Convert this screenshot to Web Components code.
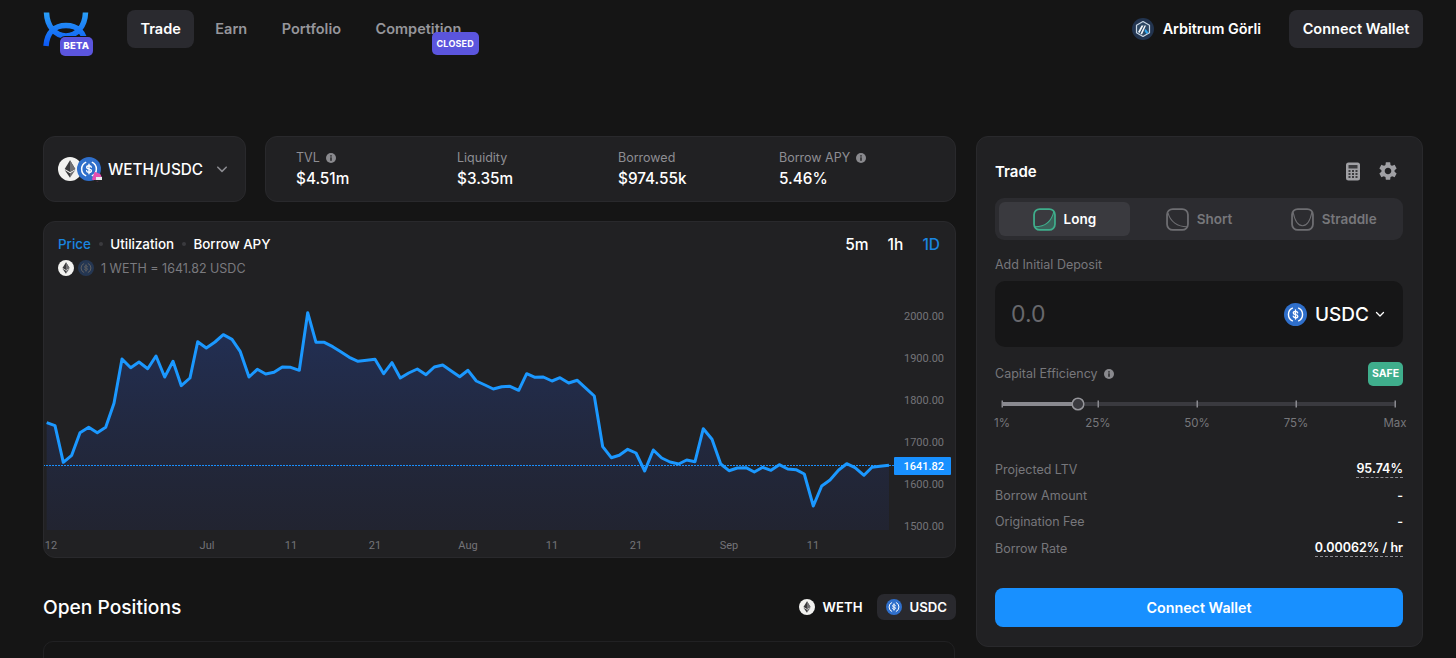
<!DOCTYPE html>
<html>
<head>
<meta charset="utf-8">
<title>Trade</title>
<style>
html,body{margin:0;height:658px;overflow:hidden;background:#151515;color:#fff;font-family:Inter,"Liberation Sans",sans-serif}
</style>
</head>
<body>
<app-shell></app-shell>
<script>
const define = (name, html) => {
  customElements.define(name, class extends HTMLElement {
    constructor() {
      super();
      this.attachShadow({ mode: "open" });
    }
    connectedCallback() {
      this.shadowRoot.innerHTML = typeof html === "function" ? html(this) : html;
    }
  });
};
const chevron = (w, c) => `<svg width="${w}" height="${w}" viewBox="0 0 10 10" fill="none" stroke="${c}" stroke-width="1.3" stroke-linecap="round" stroke-linejoin="round"><path d="M1.5 3.5 5 7l3.5-3.5"/></svg>`;

define("token-icon", el => {
  const s = el.getAttribute("size") || 20;
  const op = el.hasAttribute("dim") ? "opacity:.28" : "";
  const eth = `<circle cx="12" cy="12" r="12" fill="#f2f2f0"/><path fill="#3a3a3c" d="M12 3.2 6.7 12l5.3 3.1 5.3-3.1z"/><path fill="#6f6f72" d="M12 3.2V15.1l5.3-3.1z"/><path fill="#3a3a3c" d="m6.7 13.1 5.3 7.6v-4.5z"/><path fill="#6f6f72" d="m17.3 13.1-5.3 7.6v-4.5z"/>`;
  const usdc = `<circle cx="12" cy="12" r="12" fill="#2f6fcb"/><path fill="none" stroke="#fff" stroke-width="1.5" d="M9.2 5.1a7.5 7.5 0 0 0 0 13.8M14.8 5.1a7.5 7.5 0 0 1 0 13.8"/><path fill="none" stroke="#fff" stroke-width="1.4" stroke-linecap="round" d="M14.3 10.200c-.2-1-1.100-1.500-2.300-1.500-1.300 0-2.300.6-2.300 1.700 0 2.500 4.700 1 4.700 3.300 0 1.100-1.100 1.700-2.400 1.700s-2.200-.6-2.400-1.600M12 7.200v9.600"/>`;
  return `<style>:host{display:inline-flex;flex:none;${op}}svg{display:block}</style><svg width="${s}" height="${s}" viewBox="0 0 24 24">${el.getAttribute("name") === "usdc" ? usdc : eth}</svg>`;
});

define("info-dot", `<style>:host{display:inline-flex;flex:none}svg{display:block}</style><svg width="10" height="10" viewBox="0 0 10 10"><circle cx="5" cy="5" r="5" fill="#8a8a8e"/><rect x="4.3" y="4.3" width="1.4" height="3.5" fill="#212123"/><rect x="4.3" y="2.2" width="1.4" height="1.4" fill="#212123"/></svg>`);

define("app-logo", `<style>:host{display:block;position:relative;width:50px;height:46px;flex:none}
svg{display:block}
b{position:absolute;left:17px;top:31.500px;width:33px;height:18.500px;border-radius:5px;background:#5b55dd;font:800 9.5px/18.500px Inter,sans-serif;color:#fff;text-align:center;letter-spacing:.2px;box-shadow:0 0 0 1px #151515}</style>
<svg width="50" height="46" viewBox="0 0 50 46" fill="none"><defs><linearGradient id="g" gradientUnits="userSpaceOnUse" x1="0" y1="6" x2="0" y2="40"><stop offset="0" stop-color="#2aa0f7"/><stop offset="1" stop-color="#0c58f5"/></linearGradient></defs>
<path stroke="url(#g)" stroke-width="5.500" d="M3.500 6.500C4 20 12 30 23 30S42 20 42.500 6.500M3 40C4 26 12 19.500 23 19.500S42 26 42.500 40"/></svg><b>BETA</b>`);

define("nav-link", el => `<style>:host{display:inline-flex;align-items:center;position:relative;height:38px;padding:0 13.5px;margin-right:7.5px;border-radius:8px;font-size:14.500px;font-weight:600;color:${el.hasAttribute("active") ? "#fff" : "#96969b"};background:${el.hasAttribute("active") ? "#2a2a2f" : "transparent"}}</style><slot></slot>`);

define("float-badge", `<style>:host{position:absolute;right:-4px;top:22px;width:47px;height:23px;border-radius:5px;background:#5b55dd;color:#fff;font:700 9px/23px Inter,sans-serif;text-align:center;letter-spacing:.2px}</style><slot></slot>`);

define("app-header", `<style>:host{display:flex;align-items:center;height:57px;padding:0 33px 0 43px;box-sizing:border-box}
.nav{display:flex;margin-left:34px}.grow{flex:1}
.net{display:flex;align-items:center;gap:9px;font-size:14.400px;font-weight:600;margin-right:28px}
.btn{height:38px;width:134px;border-radius:8px;background:#29292e;font-size:14.500px;font-weight:600;display:flex;align-items:center;justify-content:center}
svg{display:block}</style>
<app-logo></app-logo>
<div class="nav"><nav-link active>Trade</nav-link><nav-link>Earn</nav-link><nav-link>Portfolio</nav-link><nav-link>Competition<float-badge>CLOSED</float-badge></nav-link></div>
<div class="grow"></div>
<div class="net"><svg width="22" height="22" viewBox="0 0 22 22"><circle cx="11" cy="11" r="11" fill="#22344f"/><path fill="#2d4763" stroke="#c8d6e4" stroke-width="1.200" stroke-linejoin="round" d="m11 3.500 6.500 3.700v7.600L11 18.500l-6.500-3.700V7.200z"/><path fill="#f2f5f8" d="M9.500 7.500h2L7.500 15 6 14zM12.500 7.500H14l-4 9-1.500-.7z"/><path fill="#2ea6ee" d="m13.500 11 3 3.500-2 1.500-2-3z"/></svg>Arbitrum Görli</div>
<div class="btn">Connect Wallet</div>`);

define("pair-select", `<style>:host{display:flex;align-items:center;box-sizing:border-box;width:203px;height:66px;padding-left:14px;background:#212123;border:1px solid #29292c;border-radius:12px;font-size:15.300px;font-weight:500;color:#fff}
.icons{position:relative;display:flex;width:45px;height:24px}
token-icon{margin-right:-5px}
.tag{position:absolute;left:33px;top:14px}
svg{display:block}span{margin-left:5px}
.ch{margin-left:13px}</style>
<div class="icons"><token-icon name="eth" size="24"></token-icon><token-icon name="usdc" size="24"></token-icon>
<svg class="tag" width="13" height="12" viewBox="0 0 13 12"><path fill="#e64fb0" d="M2 2h6l3 3v2l-3 3H2z" transform="rotate(20 6 6)"/><path fill="#e9e9ec" d="M5 6h6v4H5z"/><path fill="#222" d="M3 9h8v1.500H3z"/></svg></div>
<span>WETH/USDC</span><div class="ch">${chevron(12, "#8b8b90")}</div>`);

define("stat-item", el => `<style>:host{display:flex;flex-direction:column;gap:5px}
.l{display:flex;align-items:center;gap:6px;font-size:12.500px;color:#8e8e93;line-height:15px}
.v{font-size:15.300px;font-weight:500;color:#fff;line-height:18px}</style>
<div class="l">${el.getAttribute("label")}${el.hasAttribute("info") ? "<info-dot></info-dot>" : ""}</div><div class="v">${el.getAttribute("value")}</div>`);

define("stats-bar", `<style>:host{display:grid;grid-template-columns:repeat(4,161px);align-items:center;box-sizing:border-box;flex:1;height:66px;padding-left:30px;background:#212123;border:1px solid #29292c;border-radius:12px}</style>
<stat-item label="TVL" info value="$4.51m"></stat-item><stat-item label="Liquidity" value="$3.35m"></stat-item><stat-item label="Borrowed" value="$974.55k"></stat-item><stat-item label="Borrow APY" info value="5.46%"></stat-item>`);

const priceLine = [[46.7,422.7],[55,425.7],[63.3,462.3],[71.7,455.3],[80,432.7],[88.7,427.3],[97.3,432.7],[105.7,427.3],[114,403.3],[122,359],[130.7,367.7],[139,362],[147.7,368.7],[156,356],[164.7,377],[173,361.3],[181.3,385.7],[190,378],[197.7,341.7],[206.3,348],[215,342],[223.3,334.7],[232,339.3],[240.3,351.7],[249,377],[257.3,369.3],[265.7,374],[274,372.3],[282.3,367],[290.7,367.3],[299.3,370.3],[307.7,312.7],[316,342.3],[324.3,342.3],[332.7,346.7],[340,351.3],[349.3,357.3],[358,361.3],[366.7,360.3],[375,359.3],[383.7,373.7],[392,362.7],[400.3,378],[408.7,373],[417.3,369],[426,374.7],[434.3,367],[442.7,365],[451.3,371],[459.7,376.7],[468,370.3],[476.3,381],[485,385],[493.3,389],[501.7,386.7],[510,386.3],[518.7,390.3],[526.7,373.7],[535,377.3],[543.3,377],[552,381],[560,377.7],[568.7,383],[577.3,380.3],[586,388.3],[594.3,396],[602.7,446.7],[611.3,457.7],[619.3,455.3],[627.7,449.3],[636,453],[644.7,471],[653.3,450],[661.7,458],[670,462],[678.7,464],[686.7,460],[695,461.7],[703.3,428.7],[712,439.3],[720.7,464],[729,470.7],[737.3,468],[746,467.7],[754.3,472],[762.7,467.3],[771,470.3],[779.3,464.7],[787.7,469],[796,469.7],[804.3,474],[813.3,506],[821.7,486],[830,480],[838.7,470],[846.7,463.7],[855,467.7],[864,475.3],[872,467.3],[880,466.3],[889,465.3]];
const linePts = priceLine.map(p => p.join(",")).join(" ");
const priceLabels = [["2000.00",319.5],["1900.00",361.5],["1800.00",403.5],["1700.00",445.5],["1600.00",487.5],["1500.00",529.5]];
const dateLabels = [["12",51],["Jul",207],["11",291],["21",375],["Aug",468],["11",552],["21",636],["Sep",729],["11",813]];

define("price-chart", `<style>:host{display:block;box-sizing:border-box;height:337px;margin-top:19px;background:#212123;border:1px solid #29292c;border-radius:12px;overflow:hidden;position:relative}
.head{display:flex;justify-content:space-between;padding:13px 15px 0 14px;height:55px;box-sizing:border-box}
.tabs{display:flex;align-items:center;font-size:13.400px;font-weight:500;height:17px}
.tabs i{width:4px;height:4px;border-radius:50%;background:#3a3a3e;margin:0 7.700px}
.on{color:#1a86e0}
.rate{display:flex;align-items:center;gap:4px;margin-top:8px;font-size:12.500px;color:#7a7a7f;height:16px}
.rate span{margin-left:3px}
.range{display:flex;gap:19px;font-size:15.500px;font-weight:500;height:19px}
svg{display:block;position:absolute;left:-1px;bottom:-1px}
text{font-family:Roboto,sans-serif;font-size:11px;fill:#747479}</style>
<div class="head"><div><div class="tabs"><span class="on">Price</span><i></i><span>Utilization</span><i></i><span>Borrow APY</span></div>
<div class="rate"><token-icon name="eth" size="16"></token-icon><token-icon name="usdc" size="16" dim></token-icon><span>1 WETH = 1641.82 USDC</span></div></div>
<div class="range"><span>5m</span><span>1h</span><span class="on">1D</span></div></div>
<svg width="913" height="268" viewBox="43 290 913 268"><defs><linearGradient id="fill" x1="0" y1="0" x2="0" y2="1"><stop offset="0" stop-color="#22315a" stop-opacity=".95"/><stop offset="1" stop-color="#22263a" stop-opacity=".6"/></linearGradient></defs>
<polygon fill="url(#fill)" points="46.7,530 ${linePts} 889,530"/>
<line x1="43" x2="894" y1="465.500" y2="465.500" stroke="#1890ff" stroke-width="1" stroke-dasharray="2 1"/>
<polyline fill="none" stroke="#1b98ff" stroke-width="3" stroke-linejoin="round" points="${linePts}"/>
${priceLabels.map(([t, y]) => `<text x="944" y="${y}" text-anchor="end">${t}</text>`).join("")}
${dateLabels.map(([t, x]) => `<text x="${x}" y="549" text-anchor="middle">${t}</text>`).join("")}
<rect x="894" y="457" width="57" height="18" rx="1" fill="#1890ff"/><text x="944" y="470" text-anchor="end" style="fill:#fff;font-weight:500">1641.82</text></svg>`);

define("open-positions", `<style>:host{display:block}
.row{display:flex;align-items:center;height:26px;margin-top:36px;justify-content:space-between}
h2{margin:0;font-size:19.200px;font-weight:500;color:#fff}
.tok{display:flex;align-items:center;gap:7px;font-size:13.200px;font-weight:600;height:26px;padding:0 9px;border-radius:7px}
.act{background:#29292e}.toks{display:flex;gap:6px}
.body{margin-top:21px;height:40px;border:1px solid #212123;border-radius:10px;margin-right:1px}</style>
<div class="row"><h2>Open Positions</h2><div class="toks"><div class="tok"><token-icon name="eth" size="16"></token-icon>WETH</div><div class="tok act"><token-icon name="usdc" size="16"></token-icon>USDC</div></div></div>
<div class="body"></div>`);

const tabIcon = kind => {
  const c = kind === "long" ? "#3fae8c" : "#6e6e72";
  const curve = { long: "M2 18C12 18 18 12 20 3", short: "M2 5C4 13 11 18 20 18", straddle: "M2 4C4 14 8 17 11 17s7-3 9-13" }[kind];
  const fill = kind === "long" ? `<path fill="#3fae8c" fill-opacity=".35" d="M2 18C12 18 18 12 20 3v14a4 4 0 0 1-4 4H6a4 4 0 0 1-4-3z"/>` : "";
  return `<svg width="23" height="23" viewBox="0 0 22 22" fill="none">${fill}<rect x="1" y="1" width="20" height="20" rx="5.500" stroke="${c}" stroke-width="1.700"/><path d="${curve}" stroke="${c}" stroke-width="1"/></svg>`;
};

define("seg-tab", el => `<style>:host{display:flex;align-items:center;justify-content:center;gap:8px;flex:1;height:34px;border-radius:6px;font-size:13.500px;font-weight:600;color:${el.hasAttribute("active") ? "#fff" : "#77777b"};background:${el.hasAttribute("active") ? "#3a3a3f" : "transparent"}}svg{display:block}</style>${tabIcon(el.getAttribute("kind"))}<slot></slot>`);

define("cap-slider", `<style>:host{display:block}
svg{display:block;margin-left:6px}
.lab{display:grid;grid-template-columns:96px 99px 99px 99px 0;margin:3px 0 0 7px;font-size:11.500px;color:#77777b;line-height:16px}
.lab span{width:0;display:flex;justify-content:center;white-space:nowrap}</style>
<svg width="396" height="16" viewBox="0 0 396 16"><rect x="1" y="6" width="393" height="4" fill="#3a3a3f"/><rect x="1" y="6" width="76" height="4" fill="#8a8a90"/>
<g fill="#8a8a90"><rect x="0.500" y="4.500" width="1.500" height="7"/><rect x="96.500" y="4.500" width="1.500" height="7"/><rect x="195.500" y="4.500" width="1.500" height="7"/><rect x="294.500" y="4.500" width="1.500" height="7"/><rect x="393.500" y="4.500" width="1.500" height="7"/></g>
<circle cx="77" cy="8" r="5.800" fill="#3a3a3f" stroke="#96969b" stroke-width="1.500"/></svg>
<div class="lab"><span>1%</span><span>25%</span><span>50%</span><span>75%</span><span>Max</span></div>`);

define("info-row", el => `<style>:host{display:flex;justify-content:space-between;align-items:center;height:26.300px;font-size:12.500px;color:#77777b}
.v{color:#fff;font-weight:600;line-height:15px}
.d{border-bottom:1px dashed #8a8a90;padding-bottom:1px}</style>
<span>${el.getAttribute("label")}</span><span class="v ${el.hasAttribute("dashed") ? "d" : ""}">${el.getAttribute("value")}</span>`);

define("trade-panel", `<style>:host{display:block;box-sizing:border-box;width:447px;height:511px;padding:0 19px 0 18px;background:#212123;border:1px solid #29292c;border-radius:12px;flex:none}
.top{display:flex;align-items:center;justify-content:space-between;box-sizing:border-box;height:61px;padding:7px 4px 0 0;font-size:15px;font-weight:600}
.ic{display:flex;align-items:center;gap:16px}svg{display:block}
.seg{display:flex;gap:4px;align-items:center;padding:0 4px;height:42px;background:#2c2c30;border-radius:9px}
.cap{font-size:12.500px;color:#77777b;line-height:16px}
.input{display:flex;align-items:center;justify-content:space-between;height:66px;margin-top:8px;padding:0 18px 0 16px;background:#161617;border-radius:10px}
.zero{font-size:23px;color:#68686c}
.cur{display:flex;align-items:center;font-size:19px;font-weight:500}
.cur span{margin:0 6px 0 8px}
.eff{display:flex;align-items:center;justify-content:space-between;margin-top:15px;height:24px}
.eff div{display:flex;align-items:center;gap:6px}
.safe{width:35px;height:24px;border-radius:5px;background:#3fae8c;color:#fff;font-size:10.500px;font-weight:700;justify-content:center}
.rows{margin-top:25px}
.cta{display:flex;align-items:center;justify-content:center;height:39px;margin-top:27px;background:#1890ff;border-radius:8px;font-size:14.300px;font-weight:600}</style>
<div class="top"><span>Trade</span><div class="ic">
<svg width="16" height="19" viewBox="0 0 16 19"><rect x="1" y="0.500" width="14" height="18" rx="2.500" fill="#a0a0a4"/><rect x="3.500" y="3" width="9" height="3.500" fill="#3c3c3f"/><path fill="#3c3c3f" d="M3.500 8h2v2h-2zM7 8h2v2H7zM10.500 8h2v2h-2zM3.500 11h2v2h-2zM7 11h2v2H7zM10.500 11h2v2h-2zM3.500 14h2v2h-2zM7 14h2v2H7zM10.500 14h2v2h-2z"/></svg>
<svg width="22" height="22" viewBox="0 0 24 24"><path fill="#a0a0a4" d="M19.14 12.94c.04-.3.06-.61.06-.94 0-.32-.02-.64-.07-.94l2.03-1.58c.18-.14.23-.41.12-.61l-1.92-3.32c-.12-.22-.37-.29-.59-.22l-2.39.96c-.5-.38-1.03-.7-1.62-.94l-.36-2.54c-.04-.24-.24-.41-.48-.41h-3.84c-.24 0-.43.17-.47.41l-.36 2.54c-.59.24-1.13.57-1.62.94l-2.39-.96c-.22-.08-.47 0-.59.22L2.740 8.870c-.12.21-.08.47.12.61l2.03 1.58c-.05.3-.09.63-.09.94s.02.64.07.94l-2.03 1.58c-.18.14-.23.41-.12.61l1.92 3.32c.12.22.37.29.59.22l2.39-.96c.5.38 1.03.7 1.62.94l.36 2.54c.05.24.24.41.48.41h3.84c.24 0 .44-.17.47-.41l.36-2.54c.59-.24 1.13-.56 1.62-.94l2.39.96c.22.08.47 0 .59-.22l1.920-3.320c.12-.22.07-.47-.12-.61l-2.010-1.580zM12 15.600c-1.980 0-3.600-1.620-3.600-3.600s1.620-3.600 3.600-3.600 3.600 1.620 3.600 3.600-1.620 3.600-3.600 3.600z"/></svg></div></div>
<div class="seg"><seg-tab kind="long" active>Long</seg-tab><seg-tab kind="short">Short</seg-tab><seg-tab kind="straddle">Straddle</seg-tab></div>
<div class="cap" style="margin-top:17px">Add Initial Deposit</div>
<div class="input"><span class="zero">0.0</span><div class="cur"><token-icon name="usdc" size="23"></token-icon><span>USDC</span>${chevron(10, "#fff")}</div></div>
<div class="eff cap"><div>Capital Efficiency <info-dot></info-dot></div><div class="safe">SAFE</div></div>
<cap-slider style="margin-top:10px"></cap-slider>
<div class="rows"><info-row label="Projected LTV" value="95.74%" dashed></info-row><info-row label="Borrow Amount" value="-"></info-row><info-row label="Origination Fee" value="-"></info-row><info-row label="Borrow Rate" value="0.00062% / hr" dashed></info-row></div>
<div class="cta">Connect Wallet</div>`);

define("app-shell", `<style>:host{display:block}
main{display:flex;gap:20px;padding:79px 33px 0 43px;align-items:flex-start}
.left{flex:1;min-width:0}
.stats{display:flex;gap:19px}</style>
<app-header></app-header>
<main><div class="left"><div class="stats"><pair-select></pair-select><stats-bar></stats-bar></div><price-chart></price-chart><open-positions></open-positions></div><trade-panel></trade-panel></main>`);
</script>
</body>
</html>
